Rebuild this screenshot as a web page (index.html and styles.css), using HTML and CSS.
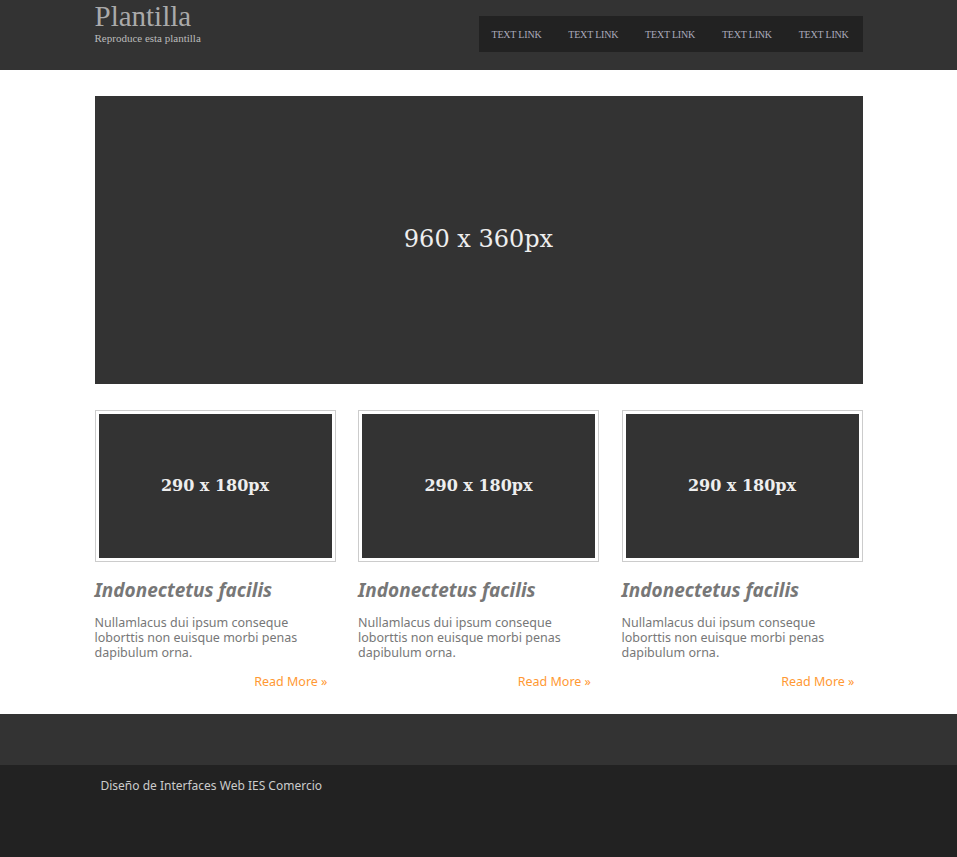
FILE: index.html
```html
<!DOCTYPE html>
<html lang="es">
<head>
<meta charset="utf-8">
<title>Plantilla</title>
<link rel="stylesheet" href="styles.css">
</head>
<body>
<header class="top">
  <div class="wrap top-inner">
    <div class="brand">
      <h1 class="brand-title">Plantilla</h1>
      <p class="brand-sub">Reproduce esta plantilla</p>
    </div>
    <nav class="nav">
      <a href="#" class="nav-link">TEXT LINK</a>
      <a href="#" class="nav-link">TEXT LINK</a>
      <a href="#" class="nav-link">TEXT LINK</a>
      <a href="#" class="nav-link">TEXT LINK</a>
      <a href="#" class="nav-link">TEXT LINK</a>
    </nav>
  </div>
</header>
<main class="wrap main">
  <div class="hero">960 x 360px</div>
  <section class="cards">
    <article class="card">
      <div class="thumb"><div class="thumb-img">290 x 180px</div></div>
      <h2 class="card-title">Indonectetus facilis</h2>
      <p class="card-text">Nullamlacus dui ipsum conseque loborttis non euisque morbi penas dapibulum orna.</p>
      <a href="#" class="more">Read More »</a>
    </article>
    <article class="card">
      <div class="thumb"><div class="thumb-img">290 x 180px</div></div>
      <h2 class="card-title">Indonectetus facilis</h2>
      <p class="card-text">Nullamlacus dui ipsum conseque loborttis non euisque morbi penas dapibulum orna.</p>
      <a href="#" class="more">Read More »</a>
    </article>
    <article class="card">
      <div class="thumb"><div class="thumb-img">290 x 180px</div></div>
      <h2 class="card-title">Indonectetus facilis</h2>
      <p class="card-text">Nullamlacus dui ipsum conseque loborttis non euisque morbi penas dapibulum orna.</p>
      <a href="#" class="more">Read More »</a>
    </article>
  </section>
</main>
<footer class="foot">
  <div class="foot-band"></div>
  <div class="foot-bottom">
    <div class="wrap foot-inner">Diseño de Interfaces Web IES Comercio</div>
  </div>
</footer>
</body>
</html>
```
FILE: styles.css
```css
* { box-sizing: border-box; }
html, body { margin: 0; padding: 0; }
body {
  background: #fff;
  font-family: "Noto Sans", "DejaVu Sans", sans-serif;
  color: #777;
}
.wrap {
  width: 768px;
  margin: 0 auto;
}
.top {
  background: #333;
  height: 70px;
}
.top-inner {
  display: flex;
  justify-content: space-between;
  align-items: flex-start;
}
.brand-title {
  margin: 0;
  padding-top: 1px;
  font-family: "Liberation Serif", serif;
  font-weight: normal;
  font-size: 29px;
  line-height: 30px;
  color: #aaa;
}
.brand-sub {
  margin: 1px 0 0;
  font-family: "Liberation Serif", serif;
  font-size: 11px;
  line-height: 13px;
  color: #bbb;
}
.nav {
  margin-top: 16px;
  width: 384px;
  height: 36px;
  background: #222;
  display: flex;
  align-items: center;
}
.nav-link {
  flex: 1;
  padding-left: 13px;
  font-family: "Liberation Serif", serif;
  font-size: 10px;
  color: #aab;
  text-decoration: none;
  letter-spacing: -0.2px;
}
.main {
  padding-top: 26px;
  padding-bottom: 25px;
}
.hero {
  height: 288px;
  background: #333;
  color: #eee;
  display: flex;
  align-items: center;
  justify-content: center;
  font-family: "DejaVu Serif", "Liberation Serif", serif;
  font-size: 24px;
  padding-bottom: 3px;
}
.cards {
  margin-top: 26px;
  display: grid;
  grid-template-columns: 241px 241px 241px;
  column-gap: 22.5px;
}
.thumb {
  border: 1px solid #ccc;
  padding: 3px;
  height: 152px;
}
.thumb-img {
  height: 100%;
  background: #333;
  color: #eee;
  display: flex;
  align-items: center;
  justify-content: center;
  font-family: "DejaVu Serif", "Liberation Serif", serif;
  font-weight: bold;
  font-size: 16px;
  padding-bottom: 2px;
}
.card-title {
  margin: 16px 0 0;
  font-size: 19px;
  line-height: 24px;
  font-style: italic;
  font-weight: bold;
  color: #777;
}
.card-text {
  margin: 13px 0 0;
  font-size: 12.5px;
  line-height: 15px;
  color: #777;
  padding-right: 30px;
}
.more {
  display: block;
  margin-top: 14px;
  padding-right: 8px;
  text-align: right;
  font-size: 12.5px;
  line-height: 15px;
  color: #f93;
  text-decoration: none;
}
.foot-band {
  background: #333;
  height: 51px;
}
.foot-bottom {
  background: #222;
  height: 92px;
}
.foot-inner {
  padding: 13px 0 0 6px;
  font-size: 12px;
  line-height: 16px;
  color: #ccc;
}
```
